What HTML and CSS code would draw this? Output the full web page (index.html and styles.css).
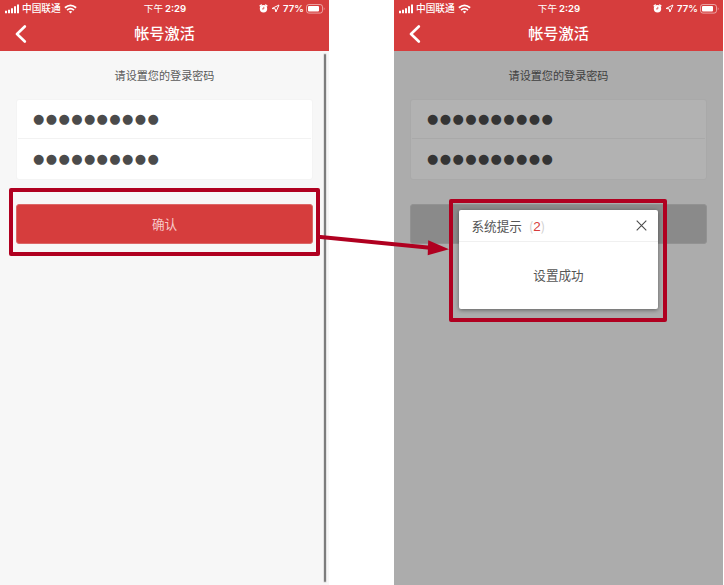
FILE: index.html
```html
<!DOCTYPE html>
<html lang="zh-CN">
<head>
<meta charset="utf-8">
<title>帐号激活</title>
<link rel="stylesheet" href="styles.css">
</head>
<body>
<svg class="symbols" aria-hidden="true">
  <symbol id="signal" viewBox="0 0 14 10"><path fill="#fff" d="M0 6.8h2v2.4H0zM3 5.8h2v3.4H3zM6 4.2h2v5H6zM9 2.2h2v7H9zM12 .6h2v8.6h-2z"/></symbol>
  <symbol id="wifi" viewBox="0 0 13 10"><g fill="none" stroke="#fff" stroke-width="1.8"><path d="M.9 3.8Q6.5-1.1 12.1 3.8"/><path d="M3 6.1Q6.5 3.1 10 6.1"/></g><path fill="#fff" d="M4.7 7.6Q6.5 6.2 8.3 7.6L6.5 9.5z"/></symbol>
  <symbol id="back" viewBox="0 0 12 18"><path d="M9.8 1.5 2 9l7.8 7.5" fill="none" stroke="#fff" stroke-width="2.6" stroke-linecap="round" stroke-linejoin="round"/></symbol>
  <symbol id="alarm" viewBox="0 0 9 9"><circle cx="4.5" cy="4.8" r="3.7" fill="#fff"/><path d="M1.2 1.9 2.3 1M7.8 1.9 6.7 1" stroke="#fff" stroke-width="1.5" stroke-linecap="round"/><path d="M4.8 2.8v2.1H3" fill="none" stroke="#d63d3d" stroke-width=".8"/></symbol>
  <symbol id="location" viewBox="0 0 9 9"><path d="M8 1 1 4.5l3.2.3L4.9 8z" fill="none" stroke="#fff" stroke-width="1" stroke-linejoin="round"/></symbol>
  <symbol id="battery" viewBox="0 0 19 10"><rect x=".5" y=".5" width="16" height="8.6" rx="2.4" fill="none" stroke="#fff" stroke-opacity=".5"/><rect x="2" y="2" width="11" height="5.6" rx="1" fill="#fff"/><path d="M17.8 3.2q1.4 1.5 0 3z" fill="#fff" fill-opacity=".6"/></symbol>
</svg>
<main class="stage">
  <section class="phone">
    <header class="topbar">
      <div class="status">
        <div class="carrier"><svg class="signal"><use href="#signal"/></svg><span>中国联通</span><svg class="wifi"><use href="#wifi"/></svg></div>
        <div class="time">下午<b>2:29</b></div>
        <div class="power"><svg class="small-icon"><use href="#alarm"/></svg><svg class="small-icon"><use href="#location"/></svg><b>77%</b><svg class="battery"><use href="#battery"/></svg></div>
      </div>
      <div class="nav"><svg class="back"><use href="#back"/></svg><h1>帐号激活</h1></div>
    </header>
    <div class="content">
      <p class="hint">请设置您的登录密码</p>
      <div class="fields"><div class="field">●●●●●●●●●●</div><div class="field">●●●●●●●●●●</div></div>
      <div class="button">确认</div>
    </div>
    <div class="scrollbar"></div>
    <div class="frame frame-button"></div>
  </section>
  <section class="phone">
    <header class="topbar">
      <div class="status">
        <div class="carrier"><svg class="signal"><use href="#signal"/></svg><span>中国联通</span><svg class="wifi"><use href="#wifi"/></svg></div>
        <div class="time">下午<b>2:29</b></div>
        <div class="power"><svg class="small-icon"><use href="#alarm"/></svg><svg class="small-icon"><use href="#location"/></svg><b>77%</b><svg class="battery"><use href="#battery"/></svg></div>
      </div>
      <div class="nav"><svg class="back"><use href="#back"/></svg><h1>帐号激活</h1></div>
    </header>
    <div class="content dimmed">
      <p class="hint">请设置您的登录密码</p>
      <div class="fields"><div class="field">●●●●●●●●●●</div><div class="field">●●●●●●●●●●</div></div>
      <div class="button"></div>
    </div>
    <div class="frame frame-dialog"></div>
    <div class="dialog">
      <div class="dialog-head"><span>系统提示</span><span class="count">(<em>2</em>)</span><svg class="close" viewBox="0 0 11 11"><path d="m.7.7 9.6 9.6M10.3.7.7 10.3" stroke="#4b4b4b" stroke-width="1.1"/></svg></div>
      <div class="dialog-body">设置成功</div>
    </div>
  </section>
  <svg class="arrow" viewBox="0 0 132 26"><path d="M0 6.8 112 17.8" stroke="#b00020" stroke-width="4"/><path d="M110.2 10.2 131 19.2l-21.3 6.1z" fill="#b00020"/></svg>
</main>
</body>
</html>
```

FILE: styles.css
```css
* { box-sizing: border-box; }
body {
  margin: 0;
  background: #fff;
  color: #5a5a5a;
  font-family: "Noto Sans CJK SC", sans-serif;
}
.symbols { position: absolute; width: 0; height: 0; }
svg { display: block; flex: none; }
.stage {
  position: relative;
  display: flex;
  gap: 65px;
  width: 723px;
  height: 585px;
  overflow: hidden;
}
.phone {
  position: relative;
  display: flex;
  flex-direction: column;
  width: 329px;
  height: 585px;
  background: #f7f7f7;
}
.topbar { height: 51px; background: #d63d3d; color: #fff; }
.status {
  display: grid;
  grid-template-columns: 1fr auto 1fr;
  height: 16px;
  padding: 0 4px 0 5px;
  font-size: 10px;
  line-height: 16px;
  white-space: nowrap;
}
.status b { font-family: Inter, sans-serif; font-weight: 600; font-size: 9.6px; }
.time { font-size: 9.6px; }
.time b { margin-left: 2px; }
.carrier, .power { display: flex; align-items: center; }
.carrier { gap: 3px; font-weight: 500; font-size: 9.7px; }
.carrier span { line-height: 14px; padding-bottom: 2px; }
.power { justify-content: flex-end; gap: 2px; }
.signal { width: 14px; height: 10px; }
.wifi { width: 13px; height: 10px; }
.small-icon { width: 9px; height: 9px; margin-right: 1px; }
.battery { width: 19px; height: 10px; }
.nav {
  display: grid;
  grid-template-columns: 27px 1fr 27px;
  height: 35px;
}
.back { width: 12px; height: 18px; margin: 9px 0 0 15px; }
h1 {
  margin: 0;
  font-size: 15.2px;
  font-weight: 500;
  line-height: 32px;
  text-align: center;
}
.content { flex: 1; padding: 13px 16px 0; }
.hint { margin: 0 0 13px; font-size: 11.1px; line-height: 22px; text-align: center; }
.fields {
  height: 81px;
  border: 1px solid #f4f4f4;
  border-radius: 3px;
  background: #fff;
}
.field {
  height: 38px;
  margin: 0 1px;
  padding-left: 15px;
  color: #4b4b4b;
  font-family: "DejaVu Sans", sans-serif;
  font-size: 13px;
  letter-spacing: 1.38px;
  line-height: 38px;
}
.field + .field { height: 40px; border-top: 1px solid #f2f2f2; line-height: 40px; }
.button {
  height: 40px;
  margin-top: 23.5px;
  border: 1px solid #dc6767;
  border-radius: 3px;
  background: #d63d3d;
  color: #f7caca;
  font-size: 12.6px;
  line-height: 37px;
  text-align: center;
}
.dimmed { background: #acacac; color: #404040; }
.dimmed .fields { background: #b2b2b2; border-color: #a9a9a9; }
.dimmed .field { color: #343434; }
.dimmed .field + .field { border-color: #a9a9a9; }
.dimmed .button { background: #8a8a8a; border-color: #929292; }
.scrollbar {
  position: absolute;
  top: 54px;
  left: 324px;
  width: 2px;
  height: 528px;
  border-radius: 1px;
  background: #7d7d7d;
  box-shadow: 0 0 0 1px #e2e2e2;
}
.frame { position: absolute; border: 4px solid #b00020; border-radius: 2px; }
.frame-button { left: 9px; top: 188px; width: 311px; height: 68px; }
.frame-dialog { left: 55px; top: 199px; width: 218px; height: 123px; }
.dialog {
  position: absolute;
  left: 65px;
  top: 210px;
  width: 199px;
  height: 99px;
  border-radius: 2px;
  background: #fff;
  box-shadow: 0 1px 4px rgba(0, 0, 0, .45);
  color: #555;
  font-size: 12.6px;
}
.dialog-head {
  display: flex;
  align-items: center;
  height: 32px;
  padding: 0 11px 0 12.5px;
  border-bottom: 1px solid #f0f0f0;
}
.count { margin-left: 7px; color: #cfcfcf; }
.count em { color: #d63d3d; font: 400 13.5px "Liberation Sans", sans-serif; }
.close { width: 11px; height: 11px; margin-left: auto; }
.dialog-body { line-height: 66px; text-align: center; }
.arrow { position: absolute; left: 318px; top: 230px; width: 132px; height: 26px; }
```
